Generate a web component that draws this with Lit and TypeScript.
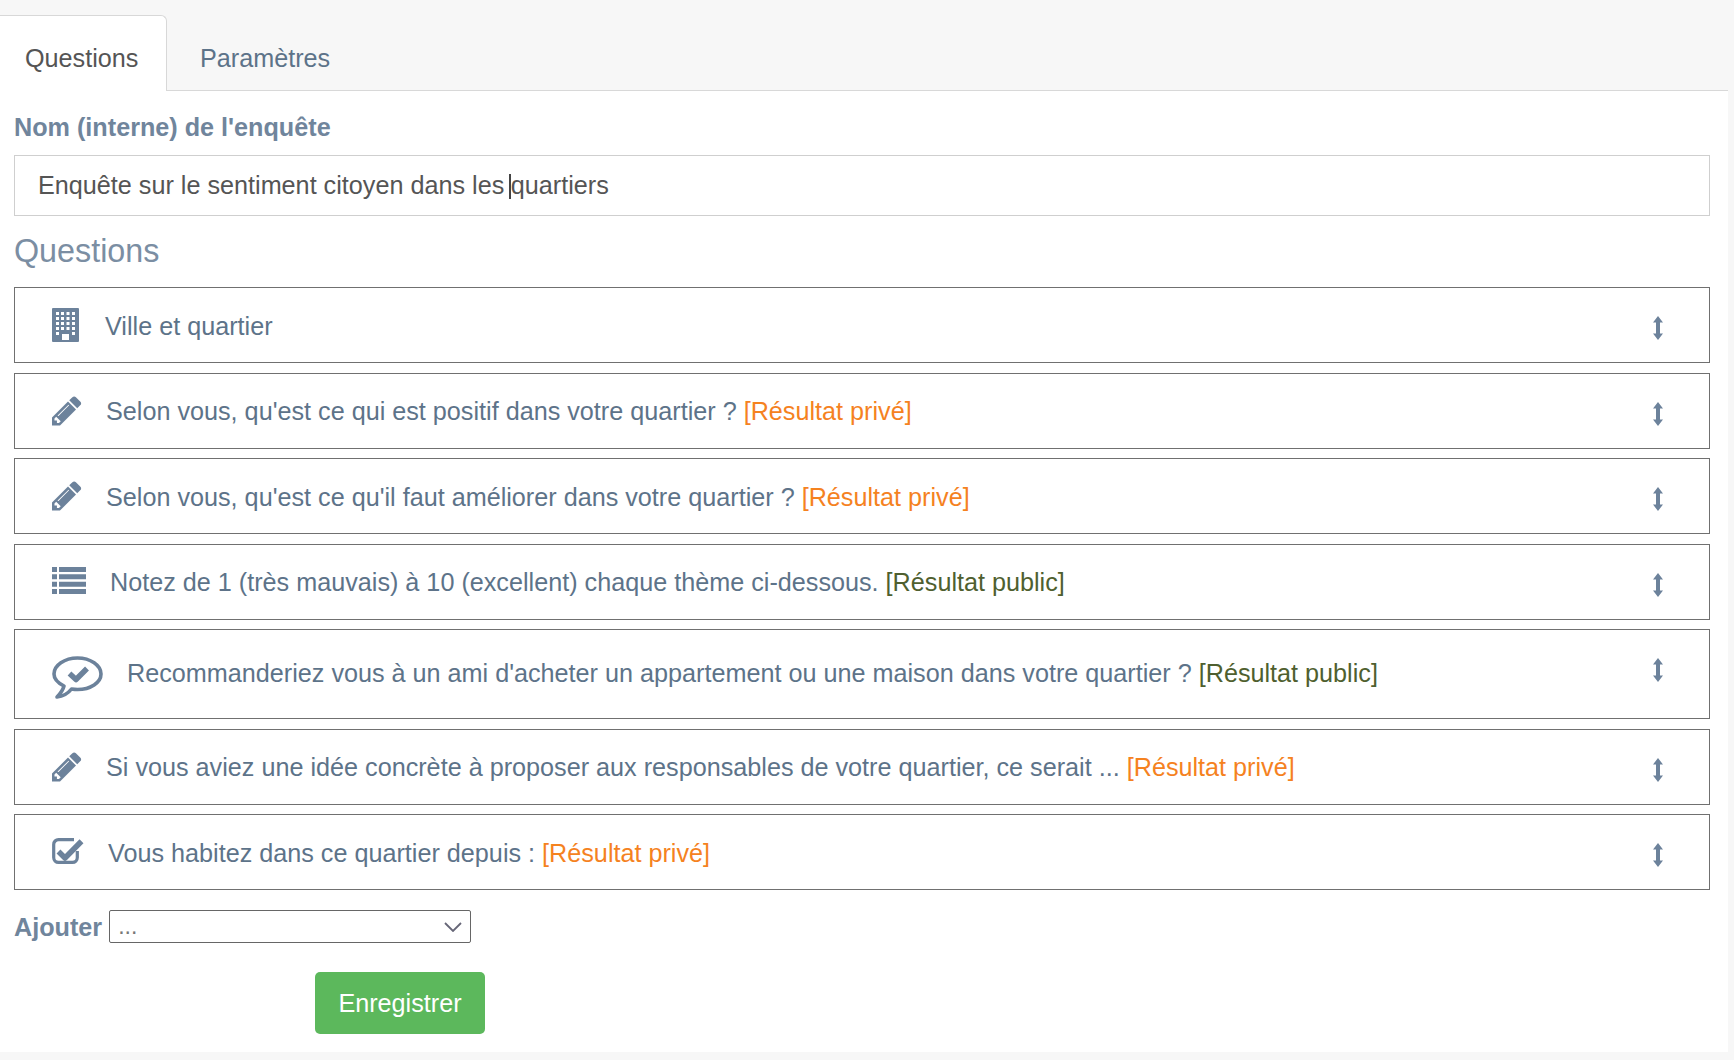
import { LitElement, html, css, svg } from "lit";
import { customElement } from "lit/decorators.js";

const pencil = svg`<path d="M491 1536l91-91-235-235-91 91v107h128v128h107zm523-928q0-22-22-22-10 0-17 7l-542 542q-7 7-7 17 0 22 22 22 10 0 17-7l542-542q7-7 7-17zm-54-192l416 416-832 832h-416v-416zm683 96q0 53-37 90l-166 166-416-416 166-165q36-38 90-38 53 0 91 38l235 234q37 39 37 91z"/>`;

const icons: Record<string, any> = {
  building: html`<svg class="ic" width="27" height="34" viewBox="0 0 27 34"><path fill-rule="evenodd" d="M1 0h25a1 1 0 0 1 1 1v32a1 1 0 0 1-1 1H1a1 1 0 0 1-1-1V1a1 1 0 0 1 1-1zM10 26v6h7v-6zM4 4h3v3H4zM9 4h3v3H9zM14.500 4h3v3h-3zM20 4h3v3h-3zM4 9h3v3H4zM9 9h3v3H9zM14.500 9h3v3h-3zM20 9h3v3h-3zM4 14h3v3H4zM9 14h3v3H9zM14.500 14h3v3h-3zM20 14h3v3h-3zM4 19h3v3H4zM9 19h3v3H9zM14.500 19h3v3h-3zM20 19h3v3h-3zM4 24h3v3H4zM20 24h3v3h-3z"/></svg>`,
  pencil: html`<svg class="ic" width="30" height="30" viewBox="128 128 1560 1560">${pencil}</svg>`,
  list: html`<svg class="ic ic-list" width="34" height="27" viewBox="0 0 34 27"><path d="M0 0h5v5H0zM7 0h27v5H7zM0 7.300h5v5H0zM7 7.300h27v5H7zM0 14.700h5v5H0zM7 14.700h27v5H7zM0 22h5v5H0zM7 22h27v5H7z"/></svg>`,
  comment: html`<svg class="ic ic-comment" width="51" height="43" viewBox="0 0 51 43"><path class="line" stroke-width="3.600" d="M25.500 2C38.500 2 49 9.500 49 18C49 26.500 38.500 33.500 25.500 33.500C23.500 33.500 21.500 33.300 19.500 33C16 37.500 10 40.500 5 41C8.500 37.500 11 34 12 30C6 27 2 22.500 2 18C2 9.500 12.500 2 25.500 2Z"/><path class="line" stroke-width="5.500" stroke-linejoin="miter" d="M17.500 17.500L24 23.500L35 12.500"/></svg>`,
  check: html`<svg class="ic ic-check" width="32" height="26" viewBox="0 0 32 26"><path class="line" stroke-width="3.200" d="M22 1.600H6.500A4.800 4.800 0 0 0 1.700 6.400V19.600A4.800 4.800 0 0 0 6.500 24.400H20.500A4.800 4.800 0 0 0 25.300 19.600V13"/><path class="line" stroke-width="5.500" stroke-linejoin="miter" d="M6.500 13.500L13 20L29.500 3.200"/></svg>`,
};

const rows = [
  { icon: "building", text: "Ville et quartier", cls: "r-building" },
  { icon: "pencil", text: "Selon vous, qu'est ce qui est positif dans votre quartier ?", tag: "priv" },
  { icon: "pencil", text: "Selon vous, qu'est ce qu'il faut améliorer dans votre quartier ?", tag: "priv" },
  { icon: "list", text: "Notez de 1 (très mauvais) à 10 (excellent) chaque thème ci-dessous.", tag: "pub", cls: "r-list" },
  { icon: "comment", text: "Recommanderiez vous à un ami d'acheter un appartement ou une maison dans votre quartier ?", tag: "pub", cls: "r-comment" },
  { icon: "pencil", text: "Si vous aviez une idée concrète à proposer aux responsables de votre quartier, ce serait ...", tag: "priv" },
  { icon: "check", text: "Vous habitez dans ce quartier depuis :", tag: "priv", cls: "r-check" },
];

@customElement("app-root")
export class AppRoot extends LitElement {
  static styles = css`
    :host { display: block; height: 1060px; background: #f7f7f7; font-family: "Liberation Sans", Arial, sans-serif; color: #5d7389; font-size: 25.2px; }
    .tabs { display: flex; height: 91px; padding-top: 15px; box-sizing: border-box; }
    .tab { height: 76px; display: flex; align-items: center; box-sizing: border-box; padding-top: 11px; }
    .tab.active { width: 167px; padding-top: 10px; padding-left: 25px; background: #fff; border: 1px solid #d8d8d8; border-left: 0; border-bottom: 0; border-radius: 0 6px 0 0; color: #555; position: relative; z-index: 1; }
    .tab.other { padding-left: 33px; }
    .panel { margin-right: 6px; height: 962px; box-sizing: border-box; margin-top: -1px; background: #fff; border-top: 1px solid #d8d8d8; padding: 1px 18px 0 14px; }
    .label { font-weight: 700; color: #70859c; font-size: 25.2px; line-height: 30px; }
    .label.first { padding-top: 20px; }
    .name { margin-top: 13px; height: 61px; box-sizing: border-box; border: 1px solid #cfcfcf; display: flex; align-items: center; padding-left: 23px; color: #555; }
    .caret { display: inline-block; width: 1.500px; height: 25px; background: #444; margin: 0 0 0 5px; vertical-align: -5px; }
    h2 { margin: 0; font-weight: 400; font-size: 32.3px; color: #7b8ea3; line-height: 36px; padding-top: 17px; padding-bottom: 18px; }
    .rows { display: flex; flex-direction: column; gap: 9.500px; }
    .row { height: 76px; box-sizing: border-box; border: 1px solid #707070; display: flex; align-items: center; padding-left: 37px; position: relative; }
    .row.r-comment { height: 90px; }
    .ic { fill: #6c829b; flex: none; display: block; }
    .ic-list, .ic-check { position: relative; top: -1px; }
    .ic-comment { position: relative; top: 3px; }
    .line { fill: none; stroke: #6c829b; stroke-linejoin: round; }
    .txt { margin-left: 24px; white-space: nowrap; position: relative; top: 1px; }
    .r-building .txt { margin-left: 26px; }
    .r-comment .txt { top: -1px; }
    .priv { color: #f5821f; }
    .pub { color: #4f5f2f; }
    .sort { position: absolute; right: 46px; top: 28px; width: 10px; height: 24px; fill: #6c829b; }
    .add { display: flex; align-items: center; margin-top: 20px; }
    .select { margin-left: 7px; width: 362px; height: 33px; box-sizing: border-box; border: 1px solid #666; border-radius: 2px; display: flex; align-items: center; justify-content: space-between; color: #777; padding: 0 8px; font-size: 23px; }
    .select svg { width: 18px; height: 10px; fill: none; stroke: #667; stroke-width: 1.800; }
    .save { margin: 29px 0 0 301px; width: 170px; height: 62px; border-radius: 5px; border: 0; background: #5cb85c; color: #fff; font: inherit; display: flex; align-items: center; justify-content: center; padding: 0; }
  `;

  render() {
    return html`
      <div class="tabs">
        <div class="tab active">Questions</div>
        <div class="tab other">Paramètres</div>
      </div>
      <div class="panel">
        <div class="label first">Nom (interne) de l'enquête</div>
        <div class="name"><span>Enquête sur le sentiment citoyen dans les<span class="caret"></span>quartiers</span></div>
        <h2>Questions</h2>
        <div class="rows">
          ${rows.map(
            (r) => html`<div class="row ${r.cls ?? ""}">
              ${icons[r.icon]}
              <span class="txt">${r.text}${r.tag
                ? html` <span class=${r.tag}>${r.tag === "priv" ? "[Résultat privé]" : "[Résultat public]"}</span>`
                : ""}</span>
              <svg class="sort" viewBox="0 0 10 24"><path d="M5 0l5 6.500H7v11h3l-5 6.500-5-6.500h3v-11H0z"/></svg>
            </div>`
          )}
        </div>
        <div class="add">
          <span class="label">Ajouter</span>
          <div class="select"><span>...</span><svg viewBox="0 0 18 10"><path d="M1 1l8 8 8-8"/></svg></div>
        </div>
        <button class="save">Enregistrer</button>
      </div>
    `;
  }
}
